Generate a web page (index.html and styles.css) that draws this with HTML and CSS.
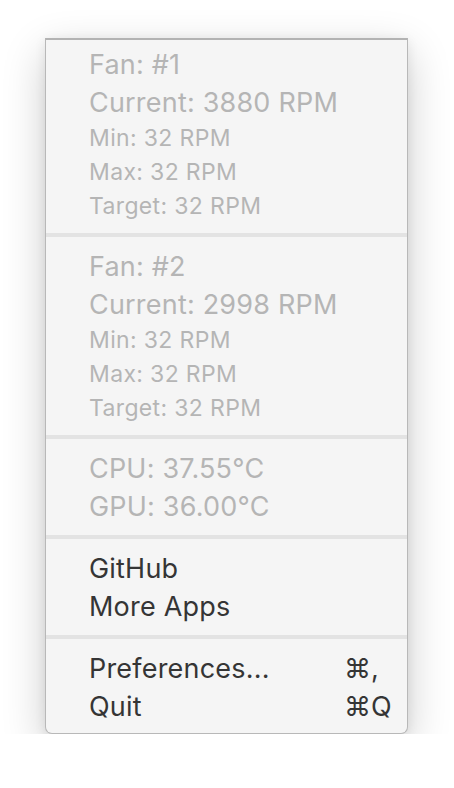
FILE: index.html
```html
<!DOCTYPE html>
<html>
<head>
<meta charset="utf-8">
<link rel="stylesheet" href="styles.css">
</head>
<body>
<div class="menu">
  <div class="section">
    <div class="item large disabled">Fan: #1</div>
    <div class="item large disabled">Current: 3880 RPM</div>
    <div class="item small disabled">Min: 32 RPM</div>
    <div class="item small disabled">Max: 32 RPM</div>
    <div class="item small disabled">Target: 32 RPM</div>
  </div>
  <div class="sep"></div>
  <div class="section">
    <div class="item large disabled">Fan: #2</div>
    <div class="item large disabled">Current: 2998 RPM</div>
    <div class="item small disabled">Min: 32 RPM</div>
    <div class="item small disabled">Max: 32 RPM</div>
    <div class="item small disabled">Target: 32 RPM</div>
  </div>
  <div class="sep"></div>
  <div class="section">
    <div class="item large disabled">CPU: 37.55°C</div>
    <div class="item large disabled">GPU: 36.00°C</div>
  </div>
  <div class="sep"></div>
  <div class="section">
    <div class="item large">GitHub</div>
    <div class="item large">More Apps</div>
  </div>
  <div class="sep"></div>
  <div class="section last">
    <div class="item large"><span>Preferences...</span><span class="key">⌘,</span></div>
    <div class="item large"><span>Quit</span><span class="key">⌘Q</span></div>
  </div>
</div>
</body>
</html>
```
FILE: styles.css
```css
html, body {
  margin: 0;
  padding: 0;
  background: #ffffff;
}
body {
  padding: 38px 0 0 45px;
  font-family: Inter, "Noto Sans", sans-serif;
}
.menu {
  width: 361px;
  background: #f5f5f5;
  border: 1px solid #b8b8b8;
  border-top: 2px solid #b3b3b3;
  border-radius: 0 0 7px 7px;
  box-shadow: 0 14px 44px rgba(0, 0, 0, 0.2), 0 2px 12px rgba(0, 0, 0, 0.08);
  padding: 5px 0 8px;
}
.item {
  display: flex;
  align-items: center;
  justify-content: space-between;
  padding: 0 15px 0 43px;
  color: #353535;
  white-space: nowrap;
}
.large {
  height: 38px;
  font-size: 27px;
  letter-spacing: 0.2px;
}
.small {
  height: 34px;
  font-size: 23px;
  letter-spacing: 0.35px;
}
.disabled {
  color: #b5b5b5;
}
.key {
  width: 48px;
  text-align: left;
  letter-spacing: 0;
  font-family: Inter, "DejaVu Sans", sans-serif;
}
.sep {
  height: 4px;
  margin: 10px 0;
  background: #e3e3e3;
}
```
